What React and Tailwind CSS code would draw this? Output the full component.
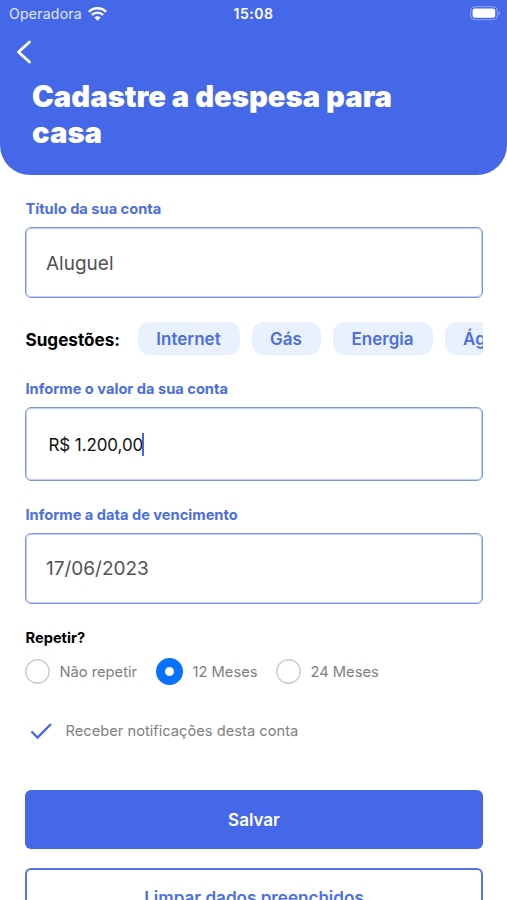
import { useState } from 'react';

const suggestions = [
  { name: 'Internet', width: 'w-[102px]' },
  { name: 'Gás', width: 'w-[69px]' },
  { name: 'Energia', width: 'w-[100px]' },
  { name: 'Água', width: 'w-[80px]' },
];

const repeatOptions = [
  { label: 'Não repetir', width: 'w-[131px]' },
  { label: '12 Meses', width: 'w-[120px]' },
  { label: '24 Meses', width: 'w-[120px]' },
];

const fieldClass =
  'rounded-[6px] border border-[#7c96e6] shadow-[inset_0_0_0_1px_#c3cff5] text-[#515156]';

function StatusBar() {
  return (
    <div className="grid h-[27px] grid-cols-3 items-center px-[7px] text-white">
      <div className="flex items-center gap-[6px] pl-[2px]">
        <span className="text-[14px] tracking-[0.25px] text-white/85">Operadora</span>
        <svg width="19" height="14" viewBox="0 0 19 14" fill="none" stroke="currentColor" strokeWidth="2.4">
          <path d="M0.9 4.8 C5.6 0 13.4 0 18.1 4.8" />
          <path d="M3.9 7.9 C7 4.8 12 4.8 15.1 7.9" />
          <path d="M6.4 10.6 C8.2 8.9 10.8 8.9 12.6 10.6 L9.5 13.7 Z" fill="currentColor" stroke="none" />
        </svg>
      </div>
      <span className="text-center text-[14px] font-semibold tracking-[0.5px]">15:08</span>
      <svg className="justify-self-end" width="30" height="15" viewBox="0 0 30 15" fill="none">
        <rect x="0.7" y="0.7" width="26.6" height="13" rx="4" stroke="#fff" strokeOpacity="0.4" />
        <rect x="2.6" y="2.6" width="22.6" height="9.2" rx="2.2" fill="#fff" />
        <path d="M28.6 5 C30.2 5.8 30.2 8.6 28.6 9.4 Z" fill="#fff" fillOpacity="0.45" />
      </svg>
    </div>
  );
}

function Header() {
  return (
    <header className="h-[174.5px] rounded-b-[30px] bg-[#4568e9]">
      <StatusBar />
      <button className="mt-[13px] ml-[16px] block text-white">
        <svg width="16" height="24" viewBox="0 0 16 24" fill="none" stroke="currentColor" strokeWidth="2.8" strokeLinecap="round" strokeLinejoin="round">
          <path d="M13.5 2 L2.5 12 L13.5 22" />
        </svg>
      </button>
      <h1 className="mt-[15px] ml-[32px] w-[400px] text-[29.25px] leading-[35.5px] font-black text-white">
        Cadastre a despesa para casa
      </h1>
    </header>
  );
}

function Label({ children }) {
  return (
    <label className="block h-[20px] pl-[0.5px] text-[14.65px] leading-[20px] font-bold text-[#4c6edf]">{children}</label>
  );
}

export default function App() {
  const [title, setTitle] = useState('Aluguel');
  const [repeat, setRepeat] = useState('12 Meses');
  const [notify, setNotify] = useState(true);

  return (
    <div className="h-[900px] w-[507px] overflow-hidden bg-white font-['Inter',sans-serif]">
      <Header />

      <main className="flex flex-col pt-[24.5px] pr-[24px] pl-[25px]">
        <Label>Título da sua conta</Label>
        <input
          type="text"
          className={`mt-[7.5px] h-[71.5px] px-[20px] pt-[2px] text-[19px] outline-none ${fieldClass}`}
          value={title}
          onChange={(e) => setTitle(e.target.value)}
        />

        {/* Suggestions */}
        <div className="mt-[24px] flex h-[33px] items-center overflow-hidden">
          <span className="w-[112.5px] shrink-0 pt-[2px] pl-[0.5px] text-[17.1px] font-bold text-black">Sugestões:</span>
          <div className="flex gap-[12px]">
            {suggestions.map((item) => (
              <button
                key={item.name}
                onClick={() => setTitle(item.name)}
                className={`${item.width} h-[33px] shrink-0 rounded-[12px] bg-[#e9f1fe] pt-[2px] text-[17px] font-semibold text-[#4c6edf]`}
              >
                {item.name}
              </button>
            ))}
          </div>
        </div>

        <div className="mt-[24px]">
          <Label>Informe o valor da sua conta</Label>
        </div>
        <div className={`mt-[8px] flex h-[74px] items-center pl-[22.5px] ${fieldClass}`}>
          <span className="pt-[3px] text-[17px] tracking-[-0.1px] text-[#111]">R$ 1.200,00</span>
          <span className="-ml-px h-[23px] w-[2px] bg-[#4568e9]" />
        </div>

        <div className="mt-[23.5px]">
          <Label>Informe a data de vencimento</Label>
        </div>
        <div className={`mt-[8px] flex h-[71.5px] items-center pt-[2px] pl-[20px] text-[19px] ${fieldClass}`}>
          17/06/2023
        </div>

        {/* Repeat options */}
        <div className="mt-[23.5px] h-[20px] pl-[0.5px] text-[14.65px] leading-[20px] font-bold text-black">Repetir?</div>
        <div className="mt-[10.5px] flex h-[27px] items-center">
          {repeatOptions.map((option) => (
            <button
              key={option.label}
              onClick={() => setRepeat(option.label)}
              className={`flex shrink-0 items-center gap-[9.5px] ${option.width}`}
            >
              {repeat === option.label ? (
                <span className="size-[27px] shrink-0 rounded-full border-[9px] border-[#0871ff]" />
              ) : (
                <span className="size-[25px] shrink-0 rounded-full border border-[#c4c4c4] shadow-[inset_0_0_0_0.5px_#c4c4c4]" />
              )}
              <span className="pt-px text-[14.7px] whitespace-nowrap text-[#808080]">{option.label}</span>
            </button>
          ))}
        </div>

        {/* Notifications */}
        <button onClick={() => setNotify(!notify)} className="mt-[32px] flex h-[28px] items-center pl-[5px]">
          <svg width="22" height="18" viewBox="0 0 22 18" fill="none" stroke="#4568e9" strokeWidth="2.3">
            {notify && <path d="M1.5 9.5 L7.5 15.5 L21 2" />}
          </svg>
          <span className="ml-[13.5px] text-[14.7px] text-[#808080]">Receber notificações desta conta</span>
        </button>

        <button className="mt-[45px] h-[59px] shrink-0 rounded-[6px] bg-[#4568e9] pt-[2px] text-[17px] font-semibold text-white">
          Salvar
        </button>
        <button className="mt-[19px] h-[59px] shrink-0 rounded-[6px] border-2 border-[#5575df] pt-px text-[17.1px] font-semibold text-[#4c6edf]">
          Limpar dados preenchidos
        </button>
      </main>
    </div>
  );
}
